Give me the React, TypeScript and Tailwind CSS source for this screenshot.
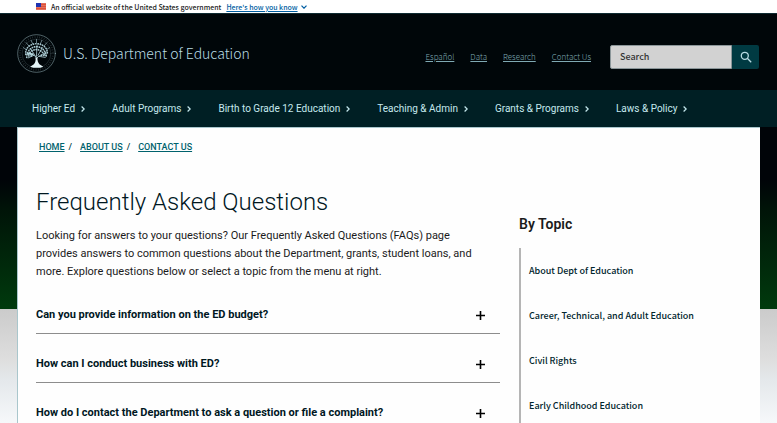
const SANS = "font-['Noto_Sans_CJK_SC','Noto_Sans_CJK_JP',sans-serif]";

const utilityLinks = ['Español', 'Data', 'Research', 'Contact Us'];

const navItems = [
  'Higher Ed',
  'Adult Programs',
  'Birth to Grade 12 Education',
  'Teaching & Admin',
  'Grants & Programs',
  'Laws & Policy',
];

const crumbs = ['Home', 'About Us', 'Contact Us'];

const faqs = [
  'Can you provide information on the ED budget?',
  'How can I conduct business with ED?',
  'How do I contact the Department to ask a question or file a complaint?',
];

const topics = [
  'About Dept of Education',
  'Career, Technical, and Adult Education',
  'Civil Rights',
  'Early Childhood Education',
];

export default function App() {
  return (
    <div className="h-screen overflow-hidden bg-[linear-gradient(to_bottom,#000408_0,#000408_180px,#001408_210px,#003a0d_309px,#cbcbcb_309px,#dedede_360px,#e4e8eb_380px,#f6f8fa_423px)] font-[Roboto,sans-serif]">
      <GovBanner />
      <SiteHeader />
      <MainNav />
      <main className="mx-[17px] min-h-full border-t border-l border-[#a9c6cc] bg-[#fefefe] pr-[19px] pl-[18px]">
        <Breadcrumbs />
        <div className="flex gap-[19px]">
          <div className="min-w-0 flex-1 pt-8">
            <h1 className="text-2xl leading-8 font-light text-[#00171f]">Frequently Asked Questions</h1>
            <p className="mt-[9px] pr-3 text-[11px] leading-[18px] text-[#1b1b1b]">
              Looking for answers to your questions? Our Frequently Asked Questions (FAQs) page provides answers to
              common questions about the Department, grants, student loans, and more. Explore questions below or select
              a topic from the menu at right.
            </p>
            <div className="mt-1">
              {faqs.map((q) => (
                <FaqRow key={q} question={q} />
              ))}
            </div>
          </div>
          <TopicMenu />
        </div>
      </main>
    </div>
  );
}

function GovBanner() {
  return (
    <div className={`flex h-[13px] items-center bg-white pl-9 text-[7px] leading-[12px] ${SANS}`}>
      <FlagIcon />
      <span className="ml-[5px] font-medium text-[#1b1b1b]">An official website of the United States government</span>
      <button type="button" className="ml-[5px] flex items-center gap-1 font-medium text-[#005ea2]">
        <span className="underline">Here's how you know</span>
        <Chevron className="h-[6px] w-1 rotate-90" />
      </button>
    </div>
  );
}

function SiteHeader() {
  return (
    <header className={`flex h-[77px] items-center border-t border-[#0e2a31] bg-[#000609] pt-0.5 pr-[18px] pl-[17px] ${SANS}`}>
      <a href="#" className="flex flex-1 items-center gap-[7px] text-[#b8dbe3]">
        <Seal />
        <span className="text-[14px] leading-5 font-light">U.S. Department of Education</span>
      </a>
      <div className="flex items-center gap-4 pt-2 text-[8px] leading-4 font-light text-[#7fa9b3]">
        {utilityLinks.map((label) => (
          <a key={label} href="#" className="underline">
            {label}
          </a>
        ))}
      </div>
      <form className="mt-2 ml-[19px] flex h-6" onSubmit={(e) => e.preventDefault()}>
        <input
          type="text"
          aria-label="Search"
          placeholder="Search"
          className="w-[122px] rounded-l-xs border border-[#8b9699] bg-[#d2d2d2] px-[9px] text-[9px] font-medium text-[#333] placeholder:text-[#333]"
        />
        <button
          type="submit"
          aria-label="Search"
          className="flex w-[27px] items-center justify-center rounded-r-xs bg-[#003a42] text-[#b8dbe3]"
        >
          <svg viewBox="0 0 12 12" className="size-3" fill="none" stroke="currentColor" strokeWidth="1.3">
            <circle cx="4.8" cy="4.8" r="3.5" />
            <path d="M7.3 7.3 11.2 11.2" />
          </svg>
        </button>
      </form>
    </header>
  );
}

function MainNav() {
  return (
    <nav className="flex h-[37px] items-center gap-[27px] bg-[#001f24] pl-8">
      {navItems.map((label) => (
        <button key={label} type="button" className="flex items-center gap-1.5 text-[10px] leading-4 whitespace-nowrap text-[#c5e9ee]">
          {label}
          <Chevron className="h-1.5 w-1" />
        </button>
      ))}
    </nav>
  );
}

function Breadcrumbs() {
  return (
    <nav aria-label="Breadcrumb" className="pt-3">
      <ol className="flex pl-[3px] text-[9px] leading-[14px] font-medium text-[#00626d] uppercase">
        {crumbs.map((label, i) => (
          <li key={label} className="flex">
            <a href="#" className="underline">
              {label}
            </a>
            {i < crumbs.length - 1 && <span className="pr-2 pl-1 text-[#003a42]">/</span>}
          </li>
        ))}
      </ol>
    </nav>
  );
}

function FaqRow({ question }: { question: string }) {
  return (
    <button type="button" className="flex w-full items-center justify-between border-b border-[#8d8d8d] pt-[21px] pr-[15px] pb-[9px] text-left">
      <span className="text-[11px] leading-[18px] font-bold text-[#00171f]">{question}</span>
      <svg viewBox="0 0 9 9" className="size-[9px]" stroke="#000" strokeWidth="1.6">
        <path d="M4.5 0V9M0 4.5H9" />
      </svg>
    </button>
  );
}

function TopicMenu() {
  return (
    <aside className="w-[222px] shrink-0 pt-[60px]">
      <h2 className="text-[14px] leading-5 font-semibold text-[#1b1b1b]">By Topic</h2>
      <ul className={`mt-[14px] border-l-2 border-[#b5b5b5] ${SANS}`}>
        {topics.map((topic) => (
          <li key={topic} className="flex h-[45px] items-center pl-2">
            <a href="#" className="text-[9px] leading-4 font-medium text-[#00252d]">
              {topic}
            </a>
          </li>
        ))}
      </ul>
    </aside>
  );
}

function Chevron({ className }: { className: string }) {
  return (
    <svg viewBox="0 0 4 6" className={className} fill="none" stroke="currentColor" strokeWidth="1.2">
      <path d="M.6.5 3.2 3 .6 5.5" />
    </svg>
  );
}

function FlagIcon() {
  return (
    <svg viewBox="0 0 10 7" className="h-[7px] w-[10px]">
      <path fill="#e0705f" d="M0 0h10v7H0z" />
      <path stroke="#db3e1f" strokeWidth=".6" d="M0 1.5h10M0 3.5h10M0 5.5h10" />
      <path fill="#1e33b1" d="M0 0h5v4H0z" />
    </svg>
  );
}

function Seal() {
  return (
    <svg viewBox="0 0 40 40" className="size-[39px]" fill="none" stroke="#b8dbe3" strokeLinecap="round">
      <circle cx="20" cy="20" r="19.3" strokeWidth=".8" opacity=".55" />
      <circle cx="20" cy="20" r="16.8" strokeWidth="2" strokeDasharray=".6 1.8" strokeLinecap="butt" opacity=".25" />
      <circle cx="20" cy="20" r="14.8" strokeWidth=".5" opacity=".3" />
      {/* rays behind the tree */}
      <path strokeWidth=".8" opacity=".7" d="M20 9V5.500M16 10 14.500 6.500M24 10 25.500 6.500M12 12 9.500 9M28 12 30.500 9M9 15.500 6.500 14M31 15.500 33.500 14" />
      {/* leaves */}
      <g strokeWidth="1.7" strokeDasharray=".3 2.100" opacity=".9">
        <path d="M9 21C8 14 14 10 20 10S32 14 31 21" />
        <path d="M10 24C10 17 15 13 20 13S30 17 30 24" />
        <path d="M12 21C14 17 17 16 20 16S26 18 28 21" />
        <path d="M11 20.500h5M12 22.500h4M25 22h5" />
      </g>
      <path strokeWidth="1.6" d="M12.500 19.500 16 21" />
      <path strokeWidth=".8" d="M20 28C20.500 24 19 22 15 21L10 19.500M20 25C22 22 25 22 30 18.500M20 23 20.500 12M19 23 14 15M21.500 22 26 14M17 22 11.500 24.500M23 23 29 24" />
      <path fill="#e4f5f8" stroke="none" d="M19 24h2c-.3 3 .5 5 2 7l4 2.500c-4 1.600-9.500 1.600-13.500 0l3.800-2.500c1.800-2 2-4 1.700-7Z" />
    </svg>
  );
}
